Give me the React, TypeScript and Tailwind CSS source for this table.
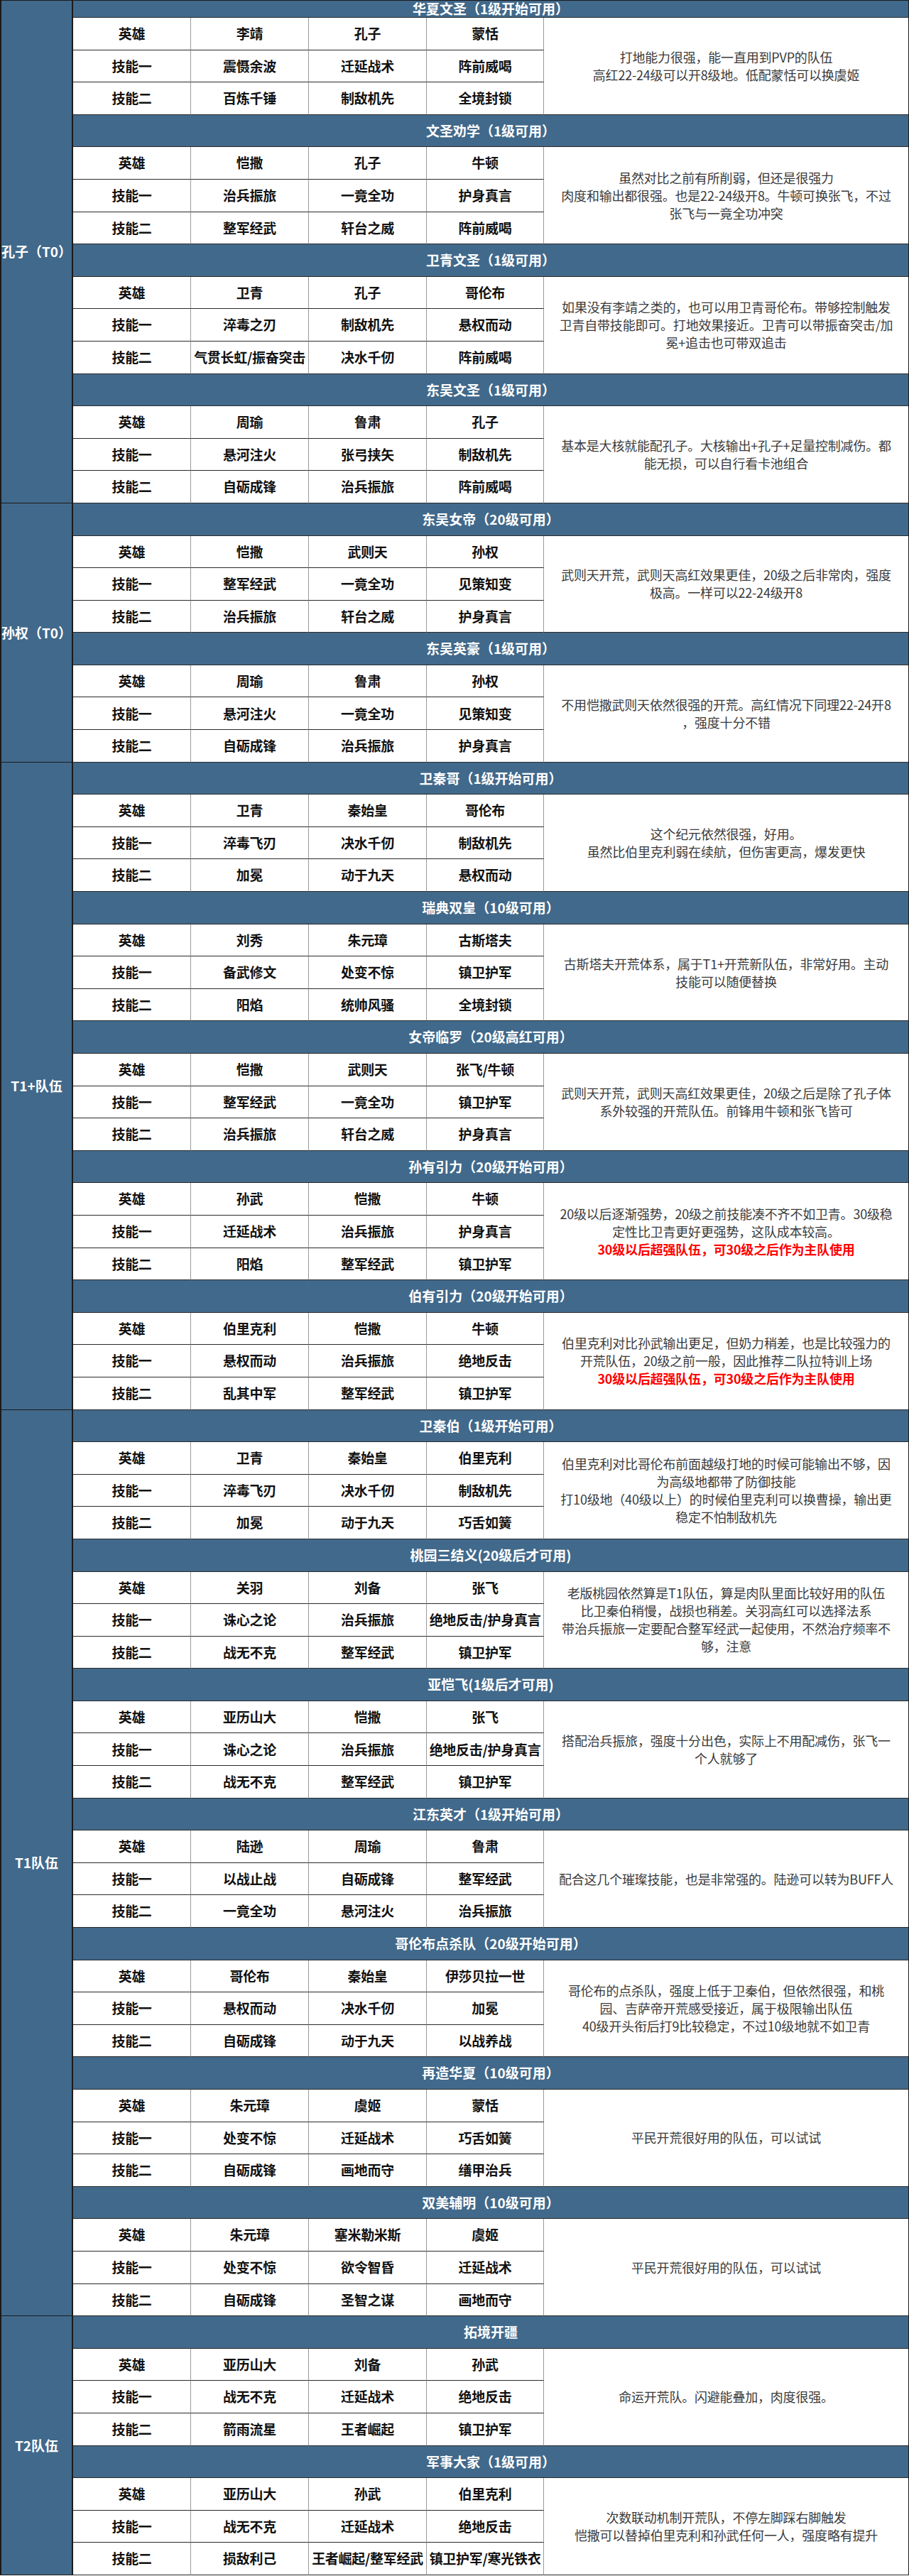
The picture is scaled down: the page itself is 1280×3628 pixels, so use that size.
import React from 'react';

type NoteLine = string | { red: string };

type Team = {
  title: string;
  heroes: string[];
  s1: string[];
  s2: string[];
  note: NoteLine[];
};

type Section = {
  label: string;
  teams: Team[];
};

const RED = '30级以后超强队伍，可30级之后作为主队使用';

const sections: Section[] = [
  {
    label: '孔子（T0）',
    teams: [
      {
        title: '华夏文圣（1级开始可用）',
        heroes: ['李靖', '孔子', '蒙恬'],
        s1: ['震慑余波', '迁延战术', '阵前威喝'],
        s2: ['百炼千锤', '制敌机先', '全境封锁'],
        note: ['打地能力很强，能一直用到PVP的队伍', '高红22-24级可以开8级地。低配蒙恬可以换虞姬'],
      },
      {
        title: '文圣劝学（1级可用）',
        heroes: ['恺撒', '孔子', '牛顿'],
        s1: ['治兵振旅', '一竟全功', '护身真言'],
        s2: ['整军经武', '轩台之威', '阵前威喝'],
        note: ['虽然对比之前有所削弱，但还是很强力', '肉度和输出都很强。也是22-24级开8。牛顿可换张飞，不过', '张飞与一竟全功冲突'],
      },
      {
        title: '卫青文圣（1级可用）',
        heroes: ['卫青', '孔子', '哥伦布'],
        s1: ['淬毒之刃', '制敌机先', '悬权而动'],
        s2: ['气贯长虹/振奋突击', '决水千仞', '阵前威喝'],
        note: ['如果没有李靖之类的，也可以用卫青哥伦布。带够控制触发', '卫青自带技能即可。打地效果接近。卫青可以带振奋突击/加', '冕+追击也可带双追击'],
      },
      {
        title: '东吴文圣（1级可用）',
        heroes: ['周瑜', '鲁肃', '孔子'],
        s1: ['悬河注火', '张弓挟矢', '制敌机先'],
        s2: ['自砺成锋', '治兵振旅', '阵前威喝'],
        note: ['基本是大核就能配孔子。大核输出+孔子+足量控制减伤。都', '能无损，可以自行看卡池组合'],
      },
    ],
  },
  {
    label: '孙权（T0）',
    teams: [
      {
        title: '东吴女帝（20级可用）',
        heroes: ['恺撒', '武则天', '孙权'],
        s1: ['整军经武', '一竟全功', '见策知变'],
        s2: ['治兵振旅', '轩台之威', '护身真言'],
        note: ['武则天开荒，武则天高红效果更佳，20级之后非常肉，强度', '极高。一样可以22-24级开8'],
      },
      {
        title: '东吴英豪（1级可用）',
        heroes: ['周瑜', '鲁肃', '孙权'],
        s1: ['悬河注火', '一竟全功', '见策知变'],
        s2: ['自砺成锋', '治兵振旅', '护身真言'],
        note: ['不用恺撒武则天依然很强的开荒。高红情况下同理22-24开8', '，强度十分不错'],
      },
    ],
  },
  {
    label: 'T1+队伍',
    teams: [
      {
        title: '卫秦哥（1级开始可用）',
        heroes: ['卫青', '秦始皇', '哥伦布'],
        s1: ['淬毒飞刃', '决水千仞', '制敌机先'],
        s2: ['加冕', '动于九天', '悬权而动'],
        note: ['这个纪元依然很强，好用。', '虽然比伯里克利弱在续航，但伤害更高，爆发更快'],
      },
      {
        title: '瑞典双皇（10级可用）',
        heroes: ['刘秀', '朱元璋', '古斯塔夫'],
        s1: ['备武修文', '处变不惊', '镇卫护军'],
        s2: ['阳焰', '统帅风骚', '全境封锁'],
        note: ['古斯塔夫开荒体系，属于T1+开荒新队伍，非常好用。主动', '技能可以随便替换'],
      },
      {
        title: '女帝临罗（20级高红可用）',
        heroes: ['恺撒', '武则天', '张飞/牛顿'],
        s1: ['整军经武', '一竟全功', '镇卫护军'],
        s2: ['治兵振旅', '轩台之威', '护身真言'],
        note: ['武则天开荒，武则天高红效果更佳，20级之后是除了孔子体', '系外较强的开荒队伍。前锋用牛顿和张飞皆可'],
      },
      {
        title: '孙有引力（20级开始可用）',
        heroes: ['孙武', '恺撒', '牛顿'],
        s1: ['迁延战术', '治兵振旅', '护身真言'],
        s2: ['阳焰', '整军经武', '镇卫护军'],
        note: ['20级以后逐渐强势，20级之前技能凑不齐不如卫青。30级稳', '定性比卫青更好更强势，这队成本较高。', { red: RED }],
      },
      {
        title: '伯有引力（20级开始可用）',
        heroes: ['伯里克利', '恺撒', '牛顿'],
        s1: ['悬权而动', '治兵振旅', '绝地反击'],
        s2: ['乱其中军', '整军经武', '镇卫护军'],
        note: ['伯里克利对比孙武输出更足，但奶力稍差，也是比较强力的', '开荒队伍，20级之前一般，因此推荐二队拉特训上场', { red: RED }],
      },
    ],
  },
  {
    label: 'T1队伍',
    teams: [
      {
        title: '卫秦伯（1级开始可用）',
        heroes: ['卫青', '秦始皇', '伯里克利'],
        s1: ['淬毒飞刃', '决水千仞', '制敌机先'],
        s2: ['加冕', '动于九天', '巧舌如簧'],
        note: ['伯里克利对比哥伦布前面越级打地的时候可能输出不够，因', '为高级地都带了防御技能', '打10级地（40级以上）的时候伯里克利可以换曹操，输出更', '稳定不怕制敌机先'],
      },
      {
        title: '桃园三结义(20级后才可用)',
        heroes: ['关羽', '刘备', '张飞'],
        s1: ['诛心之论', '治兵振旅', '绝地反击/护身真言'],
        s2: ['战无不克', '整军经武', '镇卫护军'],
        note: ['老版桃园依然算是T1队伍，算是肉队里面比较好用的队伍', '比卫秦伯稍慢，战损也稍差。关羽高红可以选择法系', '带治兵振旅一定要配合整军经武一起使用，不然治疗频率不', '够，注意'],
      },
      {
        title: '亚恺飞(1级后才可用)',
        heroes: ['亚历山大', '恺撒', '张飞'],
        s1: ['诛心之论', '治兵振旅', '绝地反击/护身真言'],
        s2: ['战无不克', '整军经武', '镇卫护军'],
        note: ['搭配治兵振旅，强度十分出色，实际上不用配减伤，张飞一', '个人就够了'],
      },
      {
        title: '江东英才（1级开始可用）',
        heroes: ['陆逊', '周瑜', '鲁肃'],
        s1: ['以战止战', '自砺成锋', '整军经武'],
        s2: ['一竟全功', '悬河注火', '治兵振旅'],
        note: ['配合这几个璀璨技能，也是非常强的。陆逊可以转为BUFF人'],
      },
      {
        title: '哥伦布点杀队（20级开始可用）',
        heroes: ['哥伦布', '秦始皇', '伊莎贝拉一世'],
        s1: ['悬权而动', '决水千仞', '加冕'],
        s2: ['自砺成锋', '动于九天', '以战养战'],
        note: ['哥伦布的点杀队，强度上低于卫秦伯，但依然很强，和桃', '园、吉萨帝开荒感受接近，属于极限输出队伍', '40级开头衔后打9比较稳定，不过10级地就不如卫青'],
      },
      {
        title: '再造华夏（10级可用）',
        heroes: ['朱元璋', '虞姬', '蒙恬'],
        s1: ['处变不惊', '迁延战术', '巧舌如簧'],
        s2: ['自砺成锋', '画地而守', '缮甲治兵'],
        note: ['平民开荒很好用的队伍，可以试试'],
      },
      {
        title: '双美辅明（10级可用）',
        heroes: ['朱元璋', '塞米勒米斯', '虞姬'],
        s1: ['处变不惊', '欲令智昏', '迁延战术'],
        s2: ['自砺成锋', '圣智之谋', '画地而守'],
        note: ['平民开荒很好用的队伍，可以试试'],
      },
    ],
  },
  {
    label: 'T2队伍',
    teams: [
      {
        title: '拓境开疆',
        heroes: ['亚历山大', '刘备', '孙武'],
        s1: ['战无不克', '迁延战术', '绝地反击'],
        s2: ['箭雨流星', '王者崛起', '镇卫护军'],
        note: ['命运开荒队。闪避能叠加，肉度很强。'],
      },
      {
        title: '军事大家（1级可用）',
        heroes: ['亚历山大', '孙武', '伯里克利'],
        s1: ['战无不克', '迁延战术', '绝地反击'],
        s2: ['损敌利己', '王者崛起/整军经武', '镇卫护军/寒光铁衣'],
        note: ['次数联动机制开荒队，不停左脚踩右脚触发', '恺撒可以替掉伯里克利和孙武任何一人，强度略有提升'],
      },
    ],
  },
];

const Cell: React.FC<{ text: string }> = ({ text }) => (
  <div className="flex items-center justify-center whitespace-nowrap border-r border-b border-r-[#9a9a9a] border-b-[#2a2a2a] text-[19px] font-bold text-[#111] tracking-[-0.3px]">
    {text}
  </div>
);

const TeamBlock: React.FC<{ team: Team; first: boolean }> = ({ team, first }) => {
  const rows = [
    ['英雄', ...team.heroes],
    ['技能一', ...team.s1],
    ['技能二', ...team.s2],
  ];
  return (
    <div>
      <div
        className={`flex items-center justify-center border-b border-[#2a2a2a] bg-[#41698b] text-[19px] font-bold text-white ${
          first ? 'h-[24px]' : 'h-[45.6px]'
        }`}
      >
        {team.title}
      </div>
      <div className="grid grid-cols-[166px_166px_166px_165px_1fr] grid-rows-[45.6px_45.6px_45.6px]">
        {rows.map((r, i) => (
          <React.Fragment key={i}>
            {r.map((t, j) => (
              <Cell key={j} text={t} />
            ))}
            {i === 0 && (
              <div className="row-span-3 flex min-w-0 flex-col items-center justify-center border-b border-[#2a2a2a] text-center text-[18px] leading-[25px] tracking-[-0.2px] text-[#3a3a3a]">
                {team.note.map((line, k) =>
                  typeof line === 'string' ? (
                    <div key={k} className="whitespace-nowrap">
                      {line}
                    </div>
                  ) : (
                    <div key={k} className="whitespace-nowrap text-[18px] font-bold text-[#ff0000]">
                      {line.red}
                    </div>
                  )
                )}
              </div>
            )}
          </React.Fragment>
        ))}
      </div>
    </div>
  );
};

const App: React.FC = () => {
  return (
    <div className="w-[1280px] bg-white font-['Noto_Sans_CJK_SC','Noto_Sans',sans-serif]">
      <div className="border-t border-l-2 border-r border-[#1a1a1a]">
        {sections.map((s, si) => (
          <div key={s.label} className="flex">
            <div className="flex w-[101px] shrink-0 items-center justify-center border-r-2 border-b border-[#1a1a1a] bg-[#41698b] text-[19px] font-bold text-white whitespace-nowrap">
              {s.label}
            </div>
            <div className="flex-1">
              {s.teams.map((t, ti) => (
                <TeamBlock key={t.title} team={t} first={si === 0 && ti === 0} />
              ))}
            </div>
          </div>
        ))}
      </div>
    </div>
  );
};

export default App;
